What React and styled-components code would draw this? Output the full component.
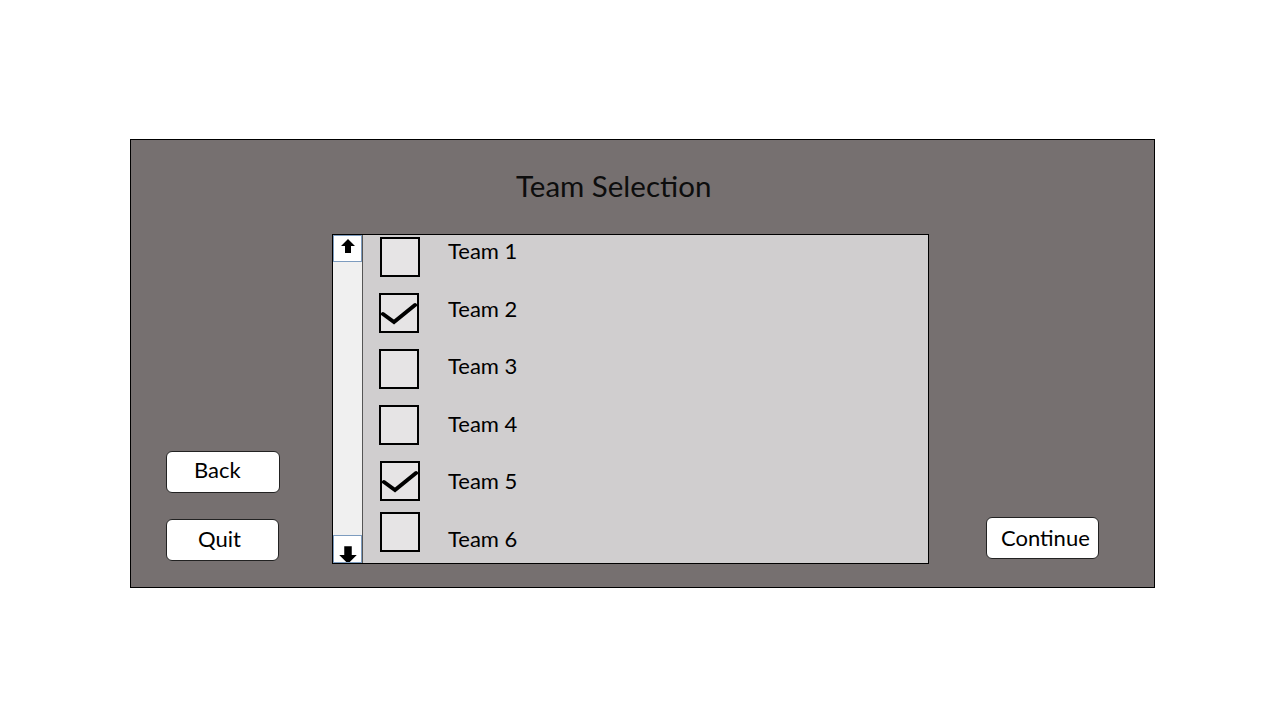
import React from 'react';
import styled, { createGlobalStyle } from 'styled-components';

const GlobalStyle = createGlobalStyle`
    body {
        margin: 0;
        background: #ffffff;
        font-family: Lato, "Open Sans", sans-serif;
    }
`

const Page = styled.div`
    width: 1280px;
    height: 720px;
    padding: 139px 0 0 130px;
    box-sizing: border-box;
`

const Panel = styled.div`
    width: 1025px;
    height: 449px;
    box-sizing: border-box;
    background: #767070;
    border: 1px solid #000;
    display: flex;
    flex-direction: column;
`

const Title = styled.h1`
    margin: 0;
    height: 94px;
    padding: 28px 0 0 385px;
    box-sizing: border-box;
    font-size: 29.5px;
    font-weight: 400;
    color: #0d0d0d;
    line-height: 36px;
`

const Main = styled.div`
    display: flex;
    flex-direction: row;
    align-items: stretch;
    padding-left: 35px;
`

const SideColumn = styled.div`
    width: ${p => p.width}px;
    margin-right: ${p => p.gap}px;
    display: flex;
    flex-direction: column;
    justify-content: flex-end;
    gap: 26px;
    padding-bottom: ${p => p.bottom}px;
`

const Button = styled.button`
    height: 42px;
    width: ${p => p.width || 114}px;
    box-sizing: border-box;
    background: #fff;
    border: 1px solid #222;
    border-radius: 6px;
    font-family: Lato, "Open Sans", sans-serif;
    font-size: 22px;
    color: #000;
    padding: 0 0 ${p => p.lift || 0}px ${p => p.shift || 0}px;
    text-align: left;
`

const ListBox = styled.div`
    width: 597px;
    height: 330px;
    box-sizing: border-box;
    background: #d0cecf;
    border: 1px solid #000;
    display: flex;
    flex-direction: row;
    margin-right: 57px;
    overflow: hidden;
`

const ScrollBar = styled.div`
    width: 29px;
    flex-shrink: 0;
    background: #f0f0f0;
    border-right: 1px solid #555;
    display: flex;
    flex-direction: column;
    justify-content: space-between;
`

const ScrollButton = styled.div`
    height: ${p => p.down ? 28 : 27}px;
    background: #fff;
    border: 1px solid #7d9cbf;
    box-sizing: border-box;
    display: flex;
    align-items: ${p => p.down ? 'flex-end' : 'flex-start'};
    justify-content: center;
    padding-top: ${p => p.down ? 0 : 2}px;
    overflow: hidden;
`

const Boxes = styled.div`
    display: flex;
    flex-direction: column;
    gap: 16px;
    padding: 2px 0 0 16px;
`

const CheckBox = styled.div`
    width: 40px;
    height: 40px;
    flex-shrink: 0;
    box-sizing: border-box;
    background: #e6e4e5;
    border: 2px solid #000;
    margin-top: ${p => p.pull || 0}px;
    margin-left: ${p => p.nudge || 0}px;
`

const Labels = styled.div`
    display: flex;
    flex-direction: column;
    padding: 1px 0 0 28px;
`

const Label = styled.div`
    height: 57.6px;
    flex-shrink: 0;
    font-size: 22px;
    line-height: 30px;
    color: #000;
`

const Arrow = ({ down, size }) => (
    <svg width={size} height={size} viewBox="0 0 16 16" style={{ transform: down ? 'rotate(180deg)' : 'none', marginBottom: down ? -3 : 0 }}>
        <path d="M8 1 L15 8 L11 8 L11 15 L5 15 L5 8 L1 8 Z" fill="#000" />
    </svg>
)

const Check = () => (
    <svg width="36" height="36" viewBox="0 0 36 36">
        <path d="M2 19 L13 27 L34 10" fill="none" stroke="#000" strokeWidth="4" strokeLinecap="round" />
    </svg>
)

const teams = [
    { name: 'Team 1', checked: false, nudge: 1 },
    { name: 'Team 2', checked: true },
    { name: 'Team 3', checked: false },
    { name: 'Team 4', checked: false },
    { name: 'Team 5', checked: true, nudge: 1 },
    { name: 'Team 6', checked: false, pull: -5, nudge: 1 },
]

export default function App() {
    return (
        <Page>
            <GlobalStyle />
            <Panel>
                <Title>Team Selection</Title>
                <Main>
                    <SideColumn width={114} gap={52} bottom={3}>
                        <Button shift={27} lift={5}>Back</Button>
                        <Button width={113} shift={31} lift={3}>Quit</Button>
                    </SideColumn>
                    <ListBox>
                        <ScrollBar>
                            <ScrollButton><Arrow size={16} /></ScrollButton>
                            <ScrollButton down><Arrow down size={20} /></ScrollButton>
                        </ScrollBar>
                        <Boxes>
                            {teams.map(t => (
                                <CheckBox key={t.name} pull={t.pull} nudge={t.nudge}>
                                    {t.checked && <Check />}
                                </CheckBox>
                            ))}
                        </Boxes>
                        <Labels>
                            {teams.map(t => <Label key={t.name}>{t.name}</Label>)}
                        </Labels>
                    </ListBox>
                    <SideColumn width={113} gap={0} bottom={5}>
                        <Button width={113} shift={14} lift={2}>Continue</Button>
                    </SideColumn>
                </Main>
            </Panel>
        </Page>
    )
}
